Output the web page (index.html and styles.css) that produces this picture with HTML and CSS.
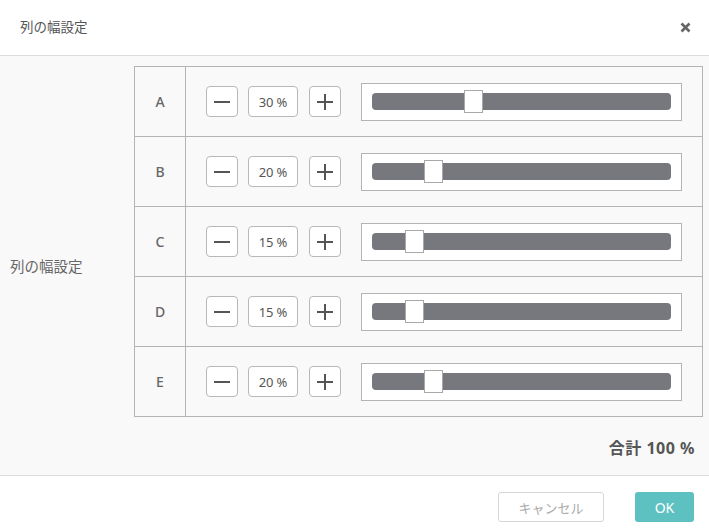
FILE: index.html
```html
<!DOCTYPE html>
<html lang="ja">
<head>
<meta charset="utf-8">
<link rel="stylesheet" href="styles.css">
</head>
<body>
<div class="dialog">
  <header class="head">
    <div class="title">列の幅設定</div>
    <div class="close" aria-label="close">
      <svg width="11" height="11" viewBox="0 0 11 11"><path d="M1.5 1.5 L9.5 9.5 M9.5 1.5 L1.5 9.5" stroke="#666" stroke-width="2.6" stroke-linecap="butt"/></svg>
    </div>
  </header>
  <main class="body">
    <div class="side-label">列の幅設定</div>
    <div class="main-col">
      <div class="table">
        <div class="row">
          <div class="cell-name">A</div>
          <div class="cell-ctrl">
            <button class="step"><span class="minus"></span></button>
            <div class="pct">30 %</div>
            <button class="step"><span class="plus"></span></button>
            <div class="slider"><div class="track"><div class="thumb" style="left:92px"></div></div></div>
          </div>
        </div>
        <div class="row">
          <div class="cell-name">B</div>
          <div class="cell-ctrl">
            <button class="step"><span class="minus"></span></button>
            <div class="pct">20 %</div>
            <button class="step"><span class="plus"></span></button>
            <div class="slider"><div class="track"><div class="thumb" style="left:52px"></div></div></div>
          </div>
        </div>
        <div class="row">
          <div class="cell-name">C</div>
          <div class="cell-ctrl">
            <button class="step"><span class="minus"></span></button>
            <div class="pct">15 %</div>
            <button class="step"><span class="plus"></span></button>
            <div class="slider"><div class="track"><div class="thumb" style="left:33px"></div></div></div>
          </div>
        </div>
        <div class="row">
          <div class="cell-name">D</div>
          <div class="cell-ctrl">
            <button class="step"><span class="minus"></span></button>
            <div class="pct">15 %</div>
            <button class="step"><span class="plus"></span></button>
            <div class="slider"><div class="track"><div class="thumb" style="left:33px"></div></div></div>
          </div>
        </div>
        <div class="row">
          <div class="cell-name">E</div>
          <div class="cell-ctrl">
            <button class="step"><span class="minus"></span></button>
            <div class="pct">20 %</div>
            <button class="step"><span class="plus"></span></button>
            <div class="slider"><div class="track"><div class="thumb" style="left:52px"></div></div></div>
          </div>
        </div>
      </div>
      <div class="total">合計 100 %</div>
    </div>
  </main>
  <footer class="foot">
    <button class="btn cancel">キャンセル</button>
    <button class="btn ok">OK</button>
  </footer>
</div>
</body>
</html>
```
FILE: styles.css
```css
* { box-sizing: border-box; }
html, body { margin: 0; padding: 0; }
body {
  width: 709px;
  height: 532px;
  overflow: hidden;
  background: #fff;
  font-family: "Noto Sans", "Noto Sans CJK JP", sans-serif;
  color: #555;
}
.dialog {
  display: flex;
  flex-direction: column;
  height: 532px;
}
.head {
  height: 56px;
  border-bottom: 1px solid #dcdcdc;
  display: flex;
  align-items: center;
  justify-content: space-between;
  padding: 0 18px 0 20px;
  flex: none;
}
.title {
  font-size: 13.5px;
  color: #555;
  padding-bottom: 3px;
}
.close {
  width: 11px;
  height: 11px;
  display: flex;
  margin-top: -1px;
}
.body {
  height: 420px;
  flex: none;
  background: #f9f9f9;
  display: flex;
  border-bottom: 1px solid #dcdcdc;
}
.side-label {
  width: 134px;
  flex: none;
  padding-left: 10px;
  align-self: center;
  font-size: 14.5px;
  color: #666;
}
.main-col {
  flex: 1;
  padding: 10px 6px 0 0;
  display: flex;
  flex-direction: column;
}
.table {
  border: 1px solid #b4b4b4;
}
.row {
  display: flex;
  height: 70px;
  border-bottom: 1px solid #b4b4b4;
}
.row:last-child {
  height: 69px;
  border-bottom: none;
}
.cell-name {
  width: 51px;
  flex: none;
  border-right: 1px solid #b4b4b4;
  display: flex;
  align-items: center;
  justify-content: center;
  font-size: 14px;
  font-weight: 500;
  color: #666;
}
.cell-ctrl {
  flex: 1;
  display: flex;
  align-items: center;
  padding: 0 20px 0 20px;
}
.step {
  width: 32px;
  height: 31px;
  border: 1px solid #b8b8b8;
  border-radius: 4px;
  background: #fff;
  padding: 0;
  display: flex;
  align-items: center;
  justify-content: center;
  flex: none;
}
.minus, .plus {
  position: relative;
  width: 16px;
  height: 16px;
  display: block;
}
.minus::before, .plus::before, .plus::after {
  content: "";
  position: absolute;
  background: #555;
}
.minus::before, .plus::before {
  left: 0; right: 0; top: 7px; height: 2px;
}
.plus::after {
  top: 0; bottom: 0; left: 7px; width: 2px;
}
.pct {
  width: 50px;
  height: 31px;
  margin: 0 11px 0 10px;
  border: 1px solid #b8b8b8;
  border-radius: 4px;
  background: #fff;
  font-size: 13px;
  color: #555;
  display: flex;
  align-items: center;
  justify-content: center;
  flex: none;
  letter-spacing: -0.2px;
}
.slider {
  flex: 1;
  margin-left: 20px;
  height: 38px;
  border: 1px solid #b4b4b4;
  background: #fff;
  padding: 0 10px;
  display: flex;
  align-items: center;
}
.track {
  position: relative;
  flex: 1;
  height: 17px;
  background: #77787d;
  border-radius: 4px;
}
.thumb {
  position: absolute;
  top: -3px;
  width: 19px;
  height: 23px;
  background: #fff;
  border: 1px solid #a8a8a8;
}
.total {
  margin-top: 18px;
  text-align: right;
  padding-right: 8px;
  font-size: 16px;
  font-weight: 700;
  letter-spacing: 0.5px;
  color: #555;
}
.foot {
  flex: 1;
  display: flex;
  justify-content: flex-end;
  align-items: flex-start;
  padding: 16px 15px 0 0;
  gap: 31px;
}
.btn {
  font-family: "Noto Sans", "Noto Sans CJK JP", sans-serif;
  height: 30px;
  border-radius: 3px;
  font-size: 13px;
  padding: 0;
}
.cancel {
  width: 106px;
  background: #fff;
  border: 1px solid #d6d6d6;
  color: #aaa;
}
.ok {
  width: 59px;
  background: #5ec1c1;
  border: none;
  color: #fff;
  font-size: 14px;
}
```
